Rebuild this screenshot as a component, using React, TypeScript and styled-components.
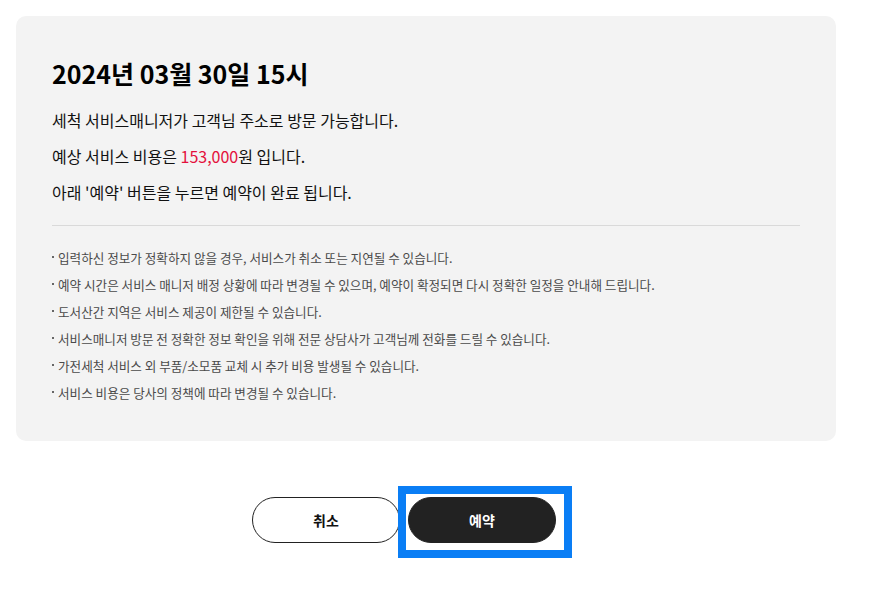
import React from 'react';
import styled, {createGlobalStyle} from 'styled-components';

const GlobalStyle = createGlobalStyle`
    html, body {
        margin: 0;
        padding: 0;
        background: #ffffff;
        font-family: "Noto Sans CJK KR", "Noto Sans", sans-serif;
        color: #111111;
    }
`;

const Page = styled.div`
    padding: 16px 0 40px 16px;
    width: 820px;
`;

const Card = styled.section`
    background: #f3f3f3;
    border-radius: 10px;
    padding: 38px 36px 35px 36px;
`;

const Title = styled.h1`
    margin: 0 0 10px 0;
    font-size: 25px;
    font-weight: 700;
    line-height: 38px;
    color: #000000;
`;

const Line = styled.p`
    margin: 0;
    font-size: 16px;
    font-weight: 400;
    line-height: 36px;
    color: #111111;
`;

const Price = styled.span`
    color: #e4103c;
`;

const Divider = styled.hr`
    border: none;
    border-top: 1px solid #d9d9d9;
    margin: 15px 0 18px 0;
`;

const Notes = styled.ul`
    list-style: none;
    margin: 0;
    padding: 0;
`;

const Note = styled.li`
    position: relative;
    padding-left: 6px;
    font-size: 12.6px;
    font-weight: 400;
    line-height: 27px;
    color: #4a4a4a;

    &::before {
        content: '';
        position: absolute;
        left: 0;
        top: 12px;
        width: 2px;
        height: 2px;
        background: #666666;
    }
`;

const Actions = styled.div`
    display: flex;
    align-items: flex-start;
    gap: 8px;
    padding: 56px 0 0 236px;
`;

const Button = styled.button<{$primary?: boolean}>`
    width: 148px;
    height: 46px;
    border-radius: 23px;
    border: 1px solid #222222;
    background: ${props => props.$primary ? '#222222' : '#ffffff'};
    color: ${props => props.$primary ? '#ffffff' : '#111111'};
    font-family: "Noto Sans CJK KR", "Noto Sans", sans-serif;
    font-size: 14px;
    font-weight: 700;
    cursor: pointer;
    padding: 0;
`;

const Focused = styled.div`
    position: relative;
    display: flex;

    &::after {
        content: '';
        position: absolute;
        top: -11px;
        left: -10px;
        right: -16px;
        bottom: -15px;
        border: 8px solid #0a7ef5;
        pointer-events: none;
    }
`;

const notes = [
    '입력하신 정보가 정확하지 않을 경우, 서비스가 취소 또는 지연될 수 있습니다.',
    '예약 시간은 서비스 매니저 배정 상황에 따라 변경될 수 있으며, 예약이 확정되면 다시 정확한 일정을 안내해 드립니다.',
    '도서산간 지역은 서비스 제공이 제한될 수 있습니다.',
    '서비스매니저 방문 전 정확한 정보 확인을 위해 전문 상담사가 고객님께 전화를 드릴 수 있습니다.',
    '가전세척 서비스 외 부품/소모품 교체 시 추가 비용 발생될 수 있습니다.',
    '서비스 비용은 당사의 정책에 따라 변경될 수 있습니다.',
];

const App = () => {
    return (
        <>
            <GlobalStyle/>
            <Page>
                <Card>
                    <Title>2024년 03월 30일 15시</Title>
                    <Line>세척 서비스매니저가 고객님 주소로 방문 가능합니다.</Line>
                    <Line>예상 서비스 비용은 <Price>153,000</Price>원 입니다.</Line>
                    <Line>아래 '예약' 버튼을 누르면 예약이 완료 됩니다.</Line>
                    <Divider/>
                    <Notes>
                        {notes.map(n => <Note key={n}>{n}</Note>)}
                    </Notes>
                </Card>
                <Actions>
                    <Button>취소</Button>
                    <Focused>
                        <Button $primary>예약</Button>
                    </Focused>
                </Actions>
            </Page>
        </>
    );
};

export default App;
